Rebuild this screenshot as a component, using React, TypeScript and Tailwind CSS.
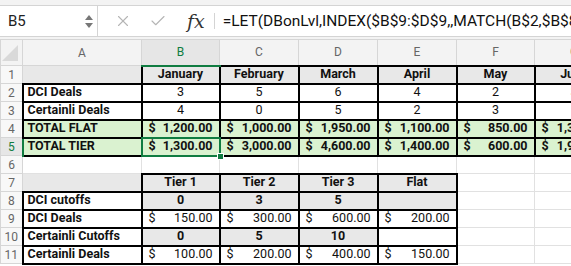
import type { ReactNode } from "react";
import clsx from "clsx";
import { Check, X } from "lucide-react";

// Excel-like view: formula bar + a slice of the grid with two bordered tables.
const cols = ["A", "B", "C", "D", "E", "F", "G"];
const widths = ["w-[22px]", "w-[119px]", "w-[78px]", "w-[79px]", "w-[79px]", "w-[79px]", "w-[78px]", "w-[79px]"];

const months = ["January", "February", "March", "April", "May", "June"];
const dci = ["3", "5", "6", "4", "2", "3"];
const cert = ["4", "0", "5", "2", "3", "5"];
const flat = ["1,200.00", "1,000.00", "1,950.00", "1,100.00", "850.00", "1,300.00"];
const tier = ["1,300.00", "3,000.00", "4,600.00", "1,400.00", "600.00", "1,900.00"];

function Td({
  children,
  box,
  fill,
  bold,
  left,
  className,
}: {
  children?: ReactNode;
  box?: boolean;
  fill?: "grey" | "green";
  bold?: boolean;
  left?: boolean;
  className?: string;
}) {
  return (
    <td
      className={clsx(
        "overflow-hidden whitespace-nowrap p-0 text-[12.5px] leading-none text-[#111]",
        box ? "border-2 border-black" : "border border-[#e1e1e1]",
        fill === "grey" && "bg-[#e8e8e8]",
        fill === "green" && "bg-[#daf2d0]",
        bold && "font-bold",
        left ? "pl-[4px] text-left" : "text-center",
        className
      )}
    >
      {children}
    </td>
  );
}

function Money({ v }: { v: string }) {
  return (
    <div className="flex justify-between px-[6px]">
      <span>$</span>
      <span>{v}</span>
    </div>
  );
}

function RowHead({ n, active }: { n: number; active?: boolean }) {
  return (
    <td
      className={clsx(
        "border border-[#d6d6d6] p-0 text-center text-[12px] leading-none",
        active ? "border-r-2 border-r-[#107c41] bg-[#e6e6e6] text-[#107c41]" : "bg-[#f8f8f8] text-[#666]"
      )}
    >
      {n}
    </td>
  );
}

export default function App() {
  return (
    <div className="h-[266px] w-[571px] overflow-hidden bg-white font-['Roboto',sans-serif]">
      {/* formula bar */}
      <div className="h-[6px] border-b border-[#d4d4d4] bg-[#f3f3f3]" />
      <div className="flex h-[31px] items-center border-b border-[#d4d4d4] bg-white">
        <div className="flex h-full w-[98px] shrink-0 items-center justify-between border-r border-[#d4d4d4] pl-[8px] pr-[4px]">
          <span className="text-[15px] text-[#222]">B5</span>
          <div className="flex flex-col gap-[3px]">
            <span className="h-0 w-0 border-x-[4px] border-b-[5px] border-x-transparent border-b-[#777]" />
            <span className="h-0 w-0 border-x-[4px] border-t-[5px] border-x-transparent border-t-[#777]" />
          </div>
        </div>
        <X size={18} strokeWidth={1.5} className="ml-[16px] shrink-0 text-[#b5b5b5]" />
        <Check size={18} strokeWidth={1.5} className="ml-[17px] shrink-0 text-[#b5b5b5]" />
        <span className="ml-[20px] shrink-0 font-['DejaVu_Serif',serif] text-[19px] italic text-[#333]">fx</span>
        <span className="ml-[9px] h-[16px] w-px shrink-0 bg-[#d4d4d4]" />
        <div className="ml-[8px] min-w-0 flex-1 overflow-hidden">
          <span className="whitespace-nowrap text-[15.5px] text-[#111]">
            =LET(DBonLvl,INDEX($B$9:$D$9,,MATCH(B$2,$B$8:$D$8,1)),FlatLvl,$E$9,DBonLvl*B2)
          </span>
        </div>
      </div>
      <div className="h-[2px] bg-[#f3f3f3]" />

      {/* grid */}
      <table className="w-[613px] table-fixed border-collapse">
        <colgroup>
          {widths.map((w, i) => (
            <col key={i} className={w} />
          ))}
        </colgroup>
        <tbody>
          <tr className="h-[26px]">
            <td className="relative border border-[#d6d6d6] bg-[#f3f3f3] p-0">
              <svg width="18" height="18" className="absolute bottom-[3px] right-[3px]">
                <polygon points="17,1 17,17 1,17" fill="#d9d9d9" />
              </svg>
            </td>
            {cols.map((c) => (
              <td
                key={c}
                className={clsx(
                  "border border-[#d6d6d6] p-0 text-center text-[12px] leading-none",
                  c === "B" ? "border-b-2 border-b-[#107c41] bg-[#e6e6e6] text-[#107c41]" : "bg-[#f3f3f3] text-[#666]"
                )}
              >
                {c}
              </td>
            ))}
          </tr>

          <tr className="h-[18px]">
            <RowHead n={1} />
            <Td fill="grey" />
            {months.map((m) => (
              <Td key={m} box fill="grey" bold>
                {m}
              </Td>
            ))}
          </tr>
          <tr className="h-[18px]">
            <RowHead n={2} />
            <Td box bold left>DCI Deals</Td>
            {dci.map((v, i) => (
              <Td key={i} box>{v}</Td>
            ))}
          </tr>
          <tr className="h-[18px]">
            <RowHead n={3} />
            <Td box bold left>Certainli Deals</Td>
            {cert.map((v, i) => (
              <Td key={i} box>{v}</Td>
            ))}
          </tr>
          <tr className="h-[18px]">
            <RowHead n={4} />
            <Td box bold left fill="green">TOTAL FLAT</Td>
            {flat.map((v, i) => (
              <Td key={i} box bold fill="green">
                <Money v={v} />
              </Td>
            ))}
          </tr>
          <tr className="h-[18px]">
            <RowHead n={5} active />
            <Td box bold left fill="green">TOTAL TIER</Td>
            {tier.map((v, i) => (
              <Td key={i} box bold fill="green" className={i === 0 ? "relative overflow-visible" : undefined}>
                <Money v={v} />
                {i === 0 && (
                  <>
                    <div className="absolute -inset-[2px] border-2 border-[#107c41]" />
                    <div className="absolute -bottom-[5px] -right-[5px] h-[7px] w-[7px] border border-white bg-[#107c41]" />
                  </>
                )}
              </Td>
            ))}
          </tr>

          <tr className="h-[18px]">
            <RowHead n={6} />
            {cols.map((c) => (
              <Td key={c} />
            ))}
          </tr>
          <tr className="h-[18px]">
            <RowHead n={7} />
            <Td fill="grey" />
            {["Tier 1", "Tier 2", "Tier 3", "Flat"].map((t) => (
              <Td key={t} box fill="grey" bold>{t}</Td>
            ))}
            <Td />
            <Td />
          </tr>
          <tr className="h-[18px]">
            <RowHead n={8} />
            <Td box bold left>DCI cutoffs</Td>
            <Td box bold fill="grey">0</Td>
            <Td box bold fill="grey">3</Td>
            <Td box bold fill="grey">5</Td>
            <Td box fill="grey" />
            <Td />
            <Td />
          </tr>
          <tr className="h-[18px]">
            <RowHead n={9} />
            <Td box bold left>DCI Deals</Td>
            {["150.00", "300.00", "600.00", "200.00"].map((v) => (
              <Td key={v} box>
                <Money v={v} />
              </Td>
            ))}
            <Td />
            <Td />
          </tr>
          <tr className="h-[18px]">
            <RowHead n={10} />
            <Td box bold left>Certainli Cutoffs</Td>
            <Td box bold fill="grey">0</Td>
            <Td box bold fill="grey">5</Td>
            <Td box bold fill="grey">10</Td>
            <Td box />
            <Td />
            <Td />
          </tr>
          <tr className="h-[18px]">
            <RowHead n={11} />
            <Td box bold left>Certainli Deals</Td>
            {["100.00", "200.00", "400.00", "150.00"].map((v) => (
              <Td key={v} box>
                <Money v={v} />
              </Td>
            ))}
            <Td />
            <Td />
          </tr>
        </tbody>
      </table>
    </div>
  );
}
